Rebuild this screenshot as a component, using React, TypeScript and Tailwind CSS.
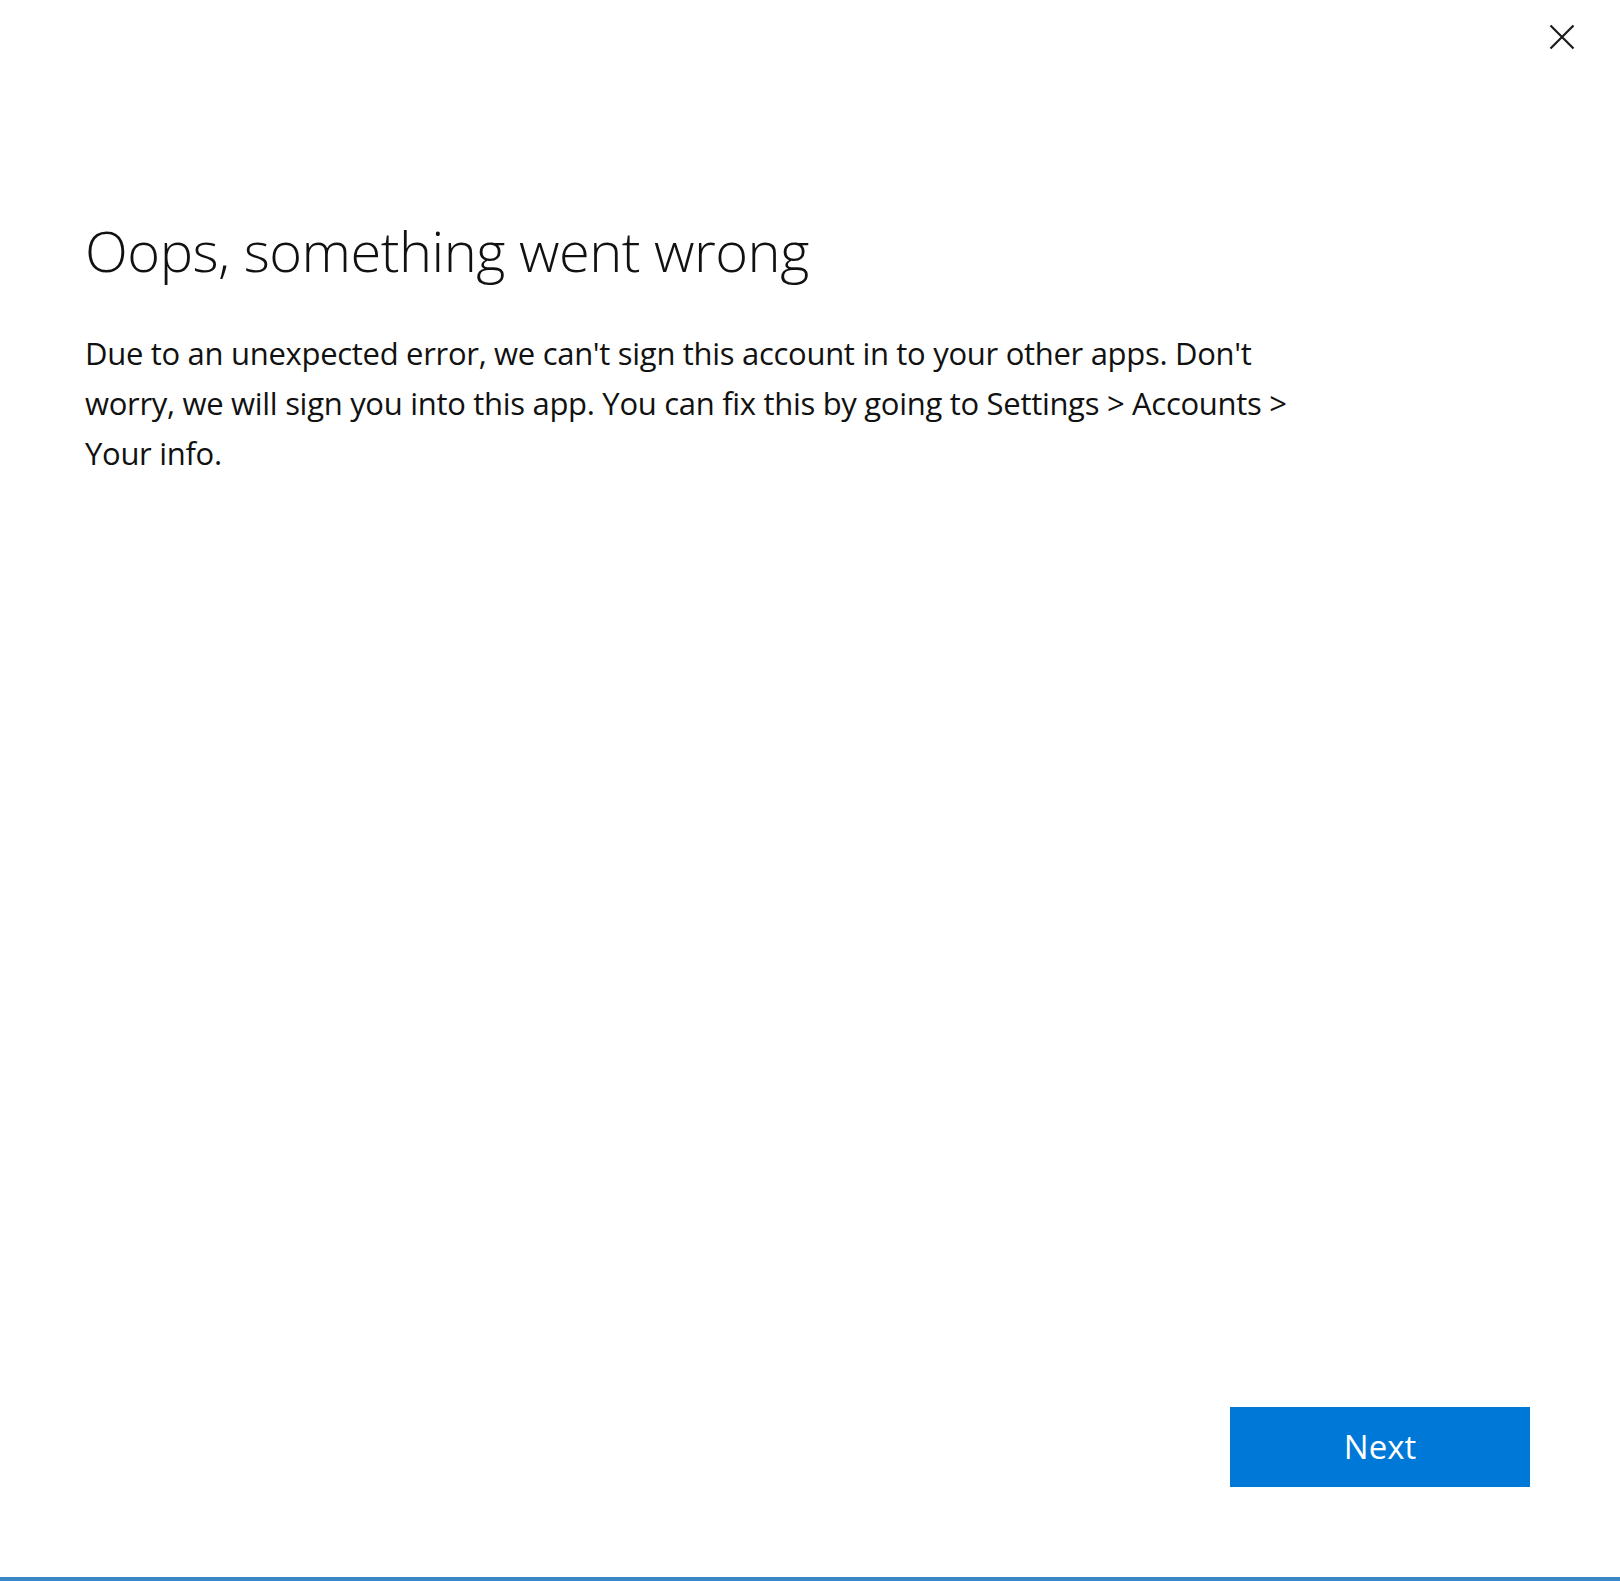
export default function App() {
  return (
    <div className="relative w-[1620px] h-[1581px] bg-white overflow-hidden" style={{ fontFamily: '"Open Sans", "Noto Sans", sans-serif' }}>
      <button className="absolute left-[1549px] top-[24px] w-[26px] h-[26px]">
        <svg width="26" height="26" viewBox="0 0 26 26" fill="none" stroke="#1a1a1a" strokeWidth="2.2">
          <path d="M1.5 1.5 L24.5 24.5 M24.5 1.5 L1.5 24.5" />
        </svg>
      </button>
      <div className="flex flex-col h-full">
        <div className="pl-[85px] pr-[60px] pt-[210px]">
          <h1 className="text-[56px] font-light leading-[80px] text-[#111] tracking-[-0.5px]">Oops, something went wrong</h1>
          <p className="mt-[38px] text-[31px] leading-[50px] text-[#111] tracking-[-0.3px]">
            Due to an unexpected error, we can't sign this account in to your other apps. Don't<br />
            worry, we will sign you into this app. You can fix this by going to Settings &gt; Accounts &gt;<br />
            Your info.
          </p>
        </div>
        <div className="flex-1" />
        <div className="flex justify-end pr-[90px] pb-[90px]">
          <button className="w-[300px] h-[80px] bg-[#0078d7] text-white text-[33px]">Next</button>
        </div>
        <div className="h-[4px] bg-[#3a87c8]" />
      </div>
    </div>
  );
}
